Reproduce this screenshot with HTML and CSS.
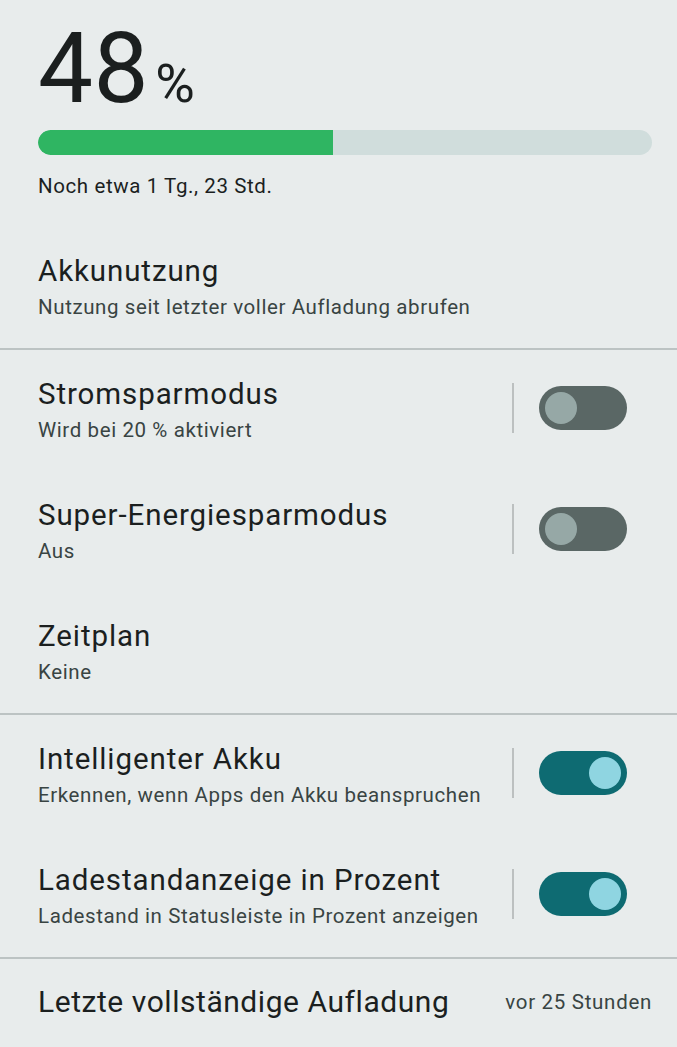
FILE: index.html
```html
<!DOCTYPE html>
<html lang="de">
	<head>
		<meta name="viewport" content="width=device-width, initial-scale=1">
		<link rel="stylesheet" href="styles.css">
	</head>

	<body>
		<div id="header">
			<div class="level"><span class="num">48</span><span class="pct">%</span></div>
			<div class="bar"><div class="fill" style="width: 48%"></div></div>
			<div class="remain">Noch etwa 1 Tg., 23 Std.</div>
		</div>

		<div class="group">
			<div class="row">
				<div class="text">
					<div class="title">Akkunutzung</div>
					<div class="sub">Nutzung seit letzter voller Aufladung abrufen</div>
				</div>
			</div>
		</div>

		<div class="group">
			<div class="row">
				<div class="text">
					<div class="title">Stromsparmodus</div>
					<div class="sub">Wird bei 20 % aktiviert</div>
				</div>
				<div class="sep"></div>
				<div class="toggle"><div class="knob"></div></div>
			</div>
			<div class="row">
				<div class="text">
					<div class="title">Super-Energiesparmodus</div>
					<div class="sub">Aus</div>
				</div>
				<div class="sep"></div>
				<div class="toggle"><div class="knob"></div></div>
			</div>
			<div class="row">
				<div class="text">
					<div class="title">Zeitplan</div>
					<div class="sub">Keine</div>
				</div>
			</div>
		</div>

		<div class="group">
			<div class="row">
				<div class="text">
					<div class="title">Intelligenter Akku</div>
					<div class="sub">Erkennen, wenn Apps den Akku beanspruchen</div>
				</div>
				<div class="sep"></div>
				<div class="toggle on"><div class="knob"></div></div>
			</div>
			<div class="row">
				<div class="text">
					<div class="title">Ladestandanzeige in Prozent</div>
					<div class="sub">Ladestand in Statusleiste in Prozent anzeigen</div>
				</div>
				<div class="sep"></div>
				<div class="toggle on"><div class="knob"></div></div>
			</div>
		</div>

		<div class="group">
			<div class="row last">
				<div class="text">
					<div class="title">Letzte vollständige Aufladung</div>
				</div>
				<div class="value">vor 25 Stunden</div>
			</div>
		</div>
	</body>

</html>
```

FILE: styles.css
```css
* {
	box-sizing: border-box;
}
html {
	font-family: Roboto, "Noto Sans", sans-serif;
	background: #e8ecec;
	color: #1b1f1f;
}
body {
	margin: 0;
	width: 677px;
	overflow: hidden;
}
#header {
	padding: 20px 25px 0 38px;
	margin-bottom: 28px;
}
.level {
	display: flex;
	align-items: baseline;
	line-height: 1;
	height: 98px;
}
.num {
	font-size: 98px;
	letter-spacing: 0.5px;
}
.pct {
	font-size: 54px;
	margin-left: 6px;
}
.bar {
	margin-top: 12px;
	height: 25px;
	border-radius: 13px;
	background: #d0dddc;
	overflow: hidden;
}
.fill {
	height: 100%;
	background: #2fb562;
	border-radius: 13px 0 0 13px;
}
.remain {
	margin-top: 18px;
	font-size: 20.5px;
	line-height: 26px;
	letter-spacing: 0.6px;
}
.group {
	border-bottom: solid 2px #bcc3c3;
}
.group:last-child {
	border-bottom: none;
}
.row {
	display: flex;
	align-items: center;
	padding: 26px 50px 23px 38px;
	height: 121px;
}
.text {
	flex: 1;
}
.title {
	font-size: 29.5px;
	line-height: 36px;
	letter-spacing: 0.9px;
}
.sub {
	font-size: 20.5px;
	line-height: 36px;
	letter-spacing: 0.6px;
	color: #394443;
}
.sep {
	width: 2px;
	height: 50px;
	background: #bcc0c0;
	margin: 0 25px 8px 10px;
}
.toggle {
	width: 88px;
	height: 44px;
	border-radius: 22px;
	background: #5a6765;
	padding: 6px;
	margin-bottom: 8px;
	display: flex;
}
.knob {
	width: 32px;
	height: 32px;
	border-radius: 50%;
	background: #96a8a6;
}
.toggle.on {
	background: #0e6b72;
	justify-content: flex-end;
}
.toggle.on .knob {
	background: #8fd5e1;
}
.row.last {
	height: auto;
	padding: 25px 25px 25px 38px;
}
.row.last .title {
	font-size: 30px;
	letter-spacing: 0.55px;
}
.value {
	font-size: 20.5px;
	letter-spacing: 0.7px;
	color: #394443;
}
```
